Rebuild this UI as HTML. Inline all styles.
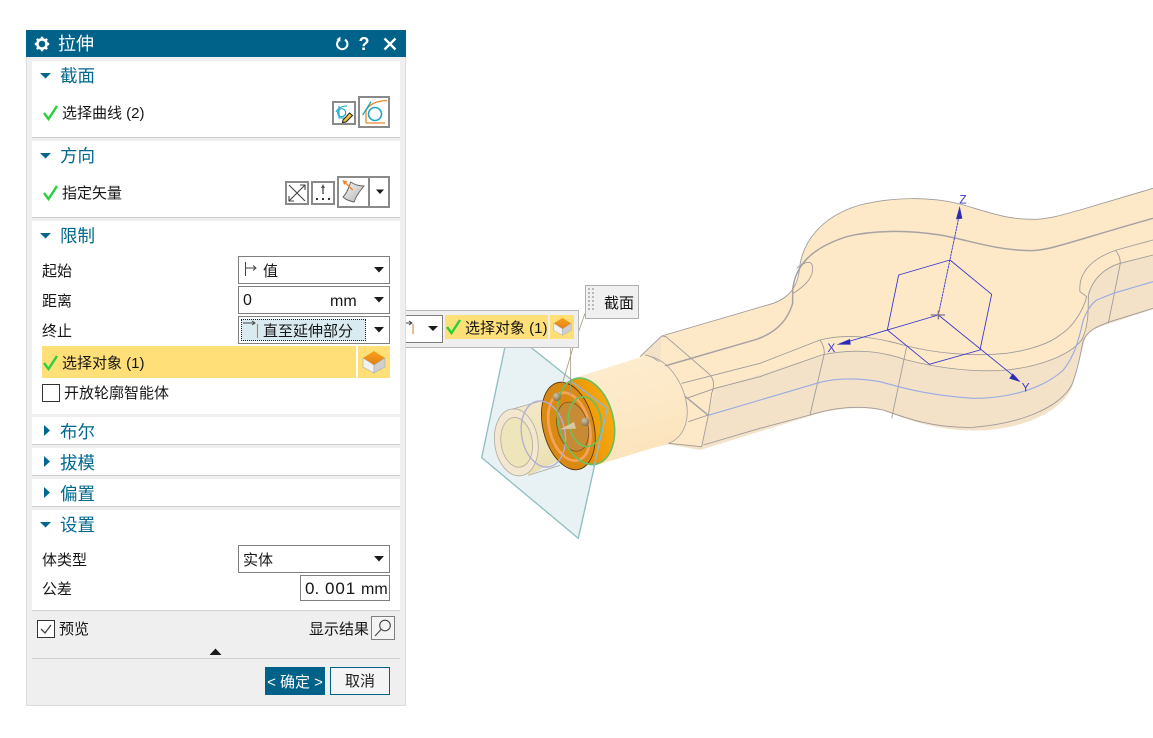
<!DOCTYPE html>
<html lang="zh"><head><meta charset="utf-8"><title>拉伸</title>
<style>
*{box-sizing:border-box}
html,body{margin:0;padding:0;width:1153px;height:738px;background:#fff;overflow:hidden}
body{position:relative;font-family:"Liberation Sans","Noto Sans CJK SC",sans-serif;font-size:15px;color:#161616}
.a{position:absolute}
.t{position:absolute;white-space:nowrap;line-height:20px;height:20px}
.h{position:absolute;white-space:nowrap;font-size:17.5px;line-height:24px;color:#00688f;left:60px}
.s{position:absolute;left:32px;width:368px;background:#fff;border-bottom:1px solid #cfcfcf}
.b{position:absolute;border:1px solid #7f7f7f;background:#fff}
.i{position:absolute;border:2px solid #8a8a8a;background:#fff}
svg{position:absolute;overflow:visible}
</style></head><body>

<!-- 3D scene -->
<svg class="a" style="left:0;top:0" width="1153" height="738" viewBox="0 0 1153 738">
<defs>
<linearGradient id="cy" x1="0.3" y1="0" x2="0.55" y2="1"><stop offset="0" stop-color="#fdeccf"/><stop offset=".55" stop-color="#fde8c6"/><stop offset="1" stop-color="#fbe3ba"/></linearGradient>
<linearGradient id="cf" x1="0" y1="0" x2="1" y2="1"><stop offset="0" stop-color="#ffeccb"/><stop offset="1" stop-color="#fbe6c4"/></linearGradient>
<linearGradient id="tb" x1="0.3" y1="0" x2="0.55" y2="1"><stop offset="0" stop-color="#f3e6c6"/><stop offset=".6" stop-color="#efe5bd"/><stop offset="1" stop-color="#e9ddb0"/></linearGradient>
<linearGradient id="or" x1="0" y1="0" x2="1" y2="0"><stop offset="0" stop-color="#c97a08"/><stop offset=".6" stop-color="#f09c08"/><stop offset="1" stop-color="#f7aa10"/></linearGradient>
<linearGradient id="sf" x1="0" y1="0" x2="1" y2="1"><stop offset="0" stop-color="#f4f4f4"/><stop offset="1" stop-color="#b5b5b5"/></linearGradient>
<linearGradient id="ct" x1="0" y1="0" x2="0" y2="1"><stop offset="0" stop-color="#f7a41f"/><stop offset="1" stop-color="#e47f12"/></linearGradient>
<radialGradient id="ball" cx=".4" cy=".35" r=".7"><stop offset="0" stop-color="#d3c6a0"/><stop offset="1" stop-color="#7d6f48"/></radialGradient>
</defs>

<!-- big body, zoom-5 coordinates -->
<g transform="translate(640 180) scale(.33333)" fill="none" stroke-linejoin="round">
<path fill="#f3e2c7" d="M0,530 L65,468 L400,370 C440,355 470,330 478,270 C485,190 540,110 660,75 C760,50 870,50 960,72 C1040,95 1100,120 1190,118 C1240,115 1280,100 1320,90 L1539,25 L1539,388 L1410,430 C1375,442 1345,450 1335,480 C1320,530 1310,580 1295,625 C1260,695 1150,750 1000,752 C880,750 800,718 730,692 C660,678 590,683 510,708 L180,810 L85,793 L0,812 Z"/>
<path fill="#fde9c8" d="M65,468 L400,370 C440,355 470,330 478,270 C485,190 540,110 660,75 C760,50 870,50 960,72 C1040,95 1100,120 1190,118 C1240,115 1280,100 1320,90 L1539,25 L1539,225 L1440,250 C1400,262 1360,290 1345,345 C1345,400 1345,440 1325,480 C1290,525 1200,560 1100,570 C1000,578 900,565 800,540 C720,512 640,505 545,525 L225,625 L205,705 L185,800 L85,790 L60,560 Z"/>
<path fill="url(#cf)" d="M0,530 L15,525 C60,530 120,610 140,670 C145,720 125,765 85,790 L0,812 Z"/>
<!-- inner thick edge -->
<path stroke="#a8a3a3" stroke-width="4.500" d="M85,555 L350,478 C400,460 440,430 458,370 L458,330 C465,260 510,205 620,170 C700,150 800,150 900,165 C980,178 1060,210 1170,212 C1230,212 1290,185 1539,115"/>
<path stroke="#a8a3a3" stroke-width="4.500" d="M85,555 L35,568 L205,706"/>
<!-- thin edges -->
<g stroke="#9d9a9a" stroke-width="2.600">
<path d="M65,468 L400,370 C440,355 470,330 478,270 C485,190 540,110 660,75 C760,50 870,50 960,72 C1040,95 1100,120 1190,118 C1240,115 1280,100 1320,90 L1539,25"/>
<path d="M125,610 L360,550 L540,480 C620,460 700,470 790,495 C880,520 1000,530 1100,520 C1170,510 1230,490 1260,465 C1300,440 1330,390 1340,350 L1320,335 C1315,290 1340,240 1430,210 L1539,180"/>
<path d="M140,655 L225,625 L360,590 L545,525 C640,505 720,512 800,540 C900,565 1000,578 1100,570 C1200,560 1290,525 1325,480 C1345,440 1345,400 1345,345 C1360,290 1400,262 1440,250 L1539,225"/>
<path d="M190,795 L360,745 L510,705 C590,680 660,675 730,690 C800,715 880,745 1000,742 C1150,730 1260,680 1295,615 C1310,580 1320,530 1330,480 C1345,450 1370,440 1410,425 L1539,385"/>
<path d="M0,530 L65,468 L78,470 L205,580 C222,595 225,615 215,640 L205,705 L185,800 L85,790 M15,525 C60,530 120,610 140,670 C145,720 125,765 85,790 M145,725 L205,705"/>
<path d="M540,480 C550,495 555,510 552,525 L510,705 M800,500 L755,715 M1425,210 C1440,225 1442,245 1440,255 L1405,430"/>
<path d="M470,265 C500,240 520,240 518,270 C515,300 490,320 460,340"/>
</g>
<path stroke="#9cabe3" stroke-width="3.500" d="M205,706 L530,610 C590,592 660,595 720,605 C770,618 850,645 1000,655 C1110,655 1210,625 1270,570 C1310,520 1320,460 1330,420 C1340,395 1350,375 1370,360 L1420,340 L1539,305"/>
<!-- triad -->
<g stroke="#3535d0" stroke-width="2.600">
<path d="M895,405 L958,105" stroke-dasharray="8 1.500"/>
<path d="M895,405 L600,492"/>
<path d="M895,405 L1130,595"/>
<path d="M742,450 L776,285 L930,240 L1055,343 L1020,510 L868,553 L742,450 Z"/>
</g>
<path fill="#2d2bb5" d="M959,78 L967,116 L948,118 Z M590,494 L630,477 L632,494 Z M1142,606 L1108,596 L1118,580 Z"/>
<path stroke="#7f6f8c" stroke-width="4" d="M872,405 L915,405 M895,392 L895,418"/>
<text x="958" y="70" font-family="Liberation Sans" font-size="36" fill="#3d3dd6">Z</text>
<text x="562" y="516" font-family="Liberation Sans" font-size="36" fill="#3d3dd6">X</text>
<text x="1145" y="634" font-family="Liberation Sans" font-size="36" fill="#3d3dd6">Y</text>
</g>

<!-- front section, zoom-4 coordinates -->
<g transform="translate(400 280) scale(.33333)" fill="none" stroke-linejoin="round">
<path fill="#e8f1f3" stroke="#8fbfbf" stroke-width="4" d="M315,200 L245,533 L535,775 L622,385 L390,200 Z"/>
<!-- main cylinder -->
<path fill="url(#cy)" d="M520,295 L720,232 C800,230 860,310 862,400 C860,450 835,480 805,490 L590,555 Z"/>
<path stroke="#a3a09f" stroke-width="2.400" d="M745,228 C810,240 860,320 862,400 C860,450 835,480 805,490"/>
<!-- thin tube -->
<path fill="url(#tb)" d="M335,392 L460,352 L520,520 L385,586 Z"/>
<ellipse cx="349" cy="487" rx="65" ry="101" transform="rotate(-8 349 487)" fill="#f3e8cf" stroke="#b4aea4" stroke-width="2.600"/>
<ellipse cx="350" cy="487" rx="47" ry="75" transform="rotate(-8 350 487)" fill="#efe5ba" stroke="#b4aea4" stroke-width="2.600"/>
<path stroke="#b4aea4" stroke-width="2.600" d="M335,388 L440,358 M385,586 L480,556"/>
<!-- disc -->
<ellipse cx="558" cy="425" rx="84" ry="132" transform="rotate(-14 558 425)" fill="url(#or)"/>
<ellipse cx="505" cy="438" rx="76" ry="134" transform="rotate(-14 505 438)" fill="#d98a12" stroke="#4e3210" stroke-width="2.500"/>
<ellipse cx="508" cy="440" rx="60" ry="104" transform="rotate(-14 508 440)" stroke="#f5a25a" stroke-width="8"/>
<ellipse cx="518" cy="440" rx="46" ry="75" transform="rotate(-14 518 440)" fill="#c98a35" stroke="#7a5524" stroke-width="2.400"/>
<ellipse cx="430" cy="462" rx="65" ry="100" transform="rotate(-10 430 462)" stroke="#b2add6" stroke-width="4"/>
<ellipse cx="558" cy="424" rx="82" ry="132" transform="rotate(-14 558 424)" stroke="#6bbf5f" stroke-width="5"/>
<ellipse cx="555" cy="425" rx="49" ry="75" transform="rotate(-8 555 425)" stroke="#6bbf5f" stroke-width="5"/>
<path stroke="#8fb7d2" stroke-width="4.500" d="M515,305 L622,385 L582,560"/>
<!-- leader lines -->
<path stroke="#a2997c" stroke-width="2.400" d="M555,100 L520,200 L487,310 M512,200 L512,345"/>
<circle cx="470" cy="350" r="13" fill="url(#ball)"/>
<circle cx="555" cy="425" r="13" fill="url(#ball)"/>
<path fill="#d8c9a0" d="M480,448 L522,426 L528,446 Z"/>
</g>
</svg>

<!-- Floating toolbar -->
<div class="a" style="left:406px;top:310px;width:173px;height:38px;background:#efefef;border:1.500px solid #b8b8b8;border-left:none"></div>
<div class="a" style="left:406px;top:315px;width:37px;height:28px;background:#fff;border:1px solid #7f7f7f;border-left:none"></div>
<svg style="left:406px;top:315px" width="37" height="28" fill="none"><path d="M0,8 H5 M3,6 L6,8 L3,10" stroke="#444" stroke-width="1"/><path d="M7,9 V19" stroke="#d9772b" stroke-width="1"/><path d="M22,11 H32 L27,16 Z" fill="#1a1a1a"/></svg>
<div class="a" style="left:445px;top:315px;width:103px;height:24px;background:#ffdf78"></div>
<div class="a" style="left:550px;top:315px;width:24px;height:24px;background:#ffdf78"></div>
<svg style="left:445px;top:318px" width="18" height="20" fill="none"><path d="M2,9 L6.500,15 L15,2" stroke="#2ad13c" stroke-width="2.500"/></svg>
<div class="t" style="left:465px;top:319px">选择对象 (1)</div>
<svg style="left:553px;top:317px" width="19" height="19" viewBox="0 0 24 24"><path d="M12,1 L23,8 L12,15 L1,8 Z" fill="url(#ct)"/><path d="M1,8 L12,15 V23 L1,17 Z" fill="#f2f2f2" stroke="#aaa" stroke-width=".6"/><path d="M23,8 L12,15 V23 L23,17 Z" fill="#cfcfcf" stroke="#aaa" stroke-width=".6"/></svg>
<div class="a" style="left:585px;top:285px;width:54px;height:34px;background:#f0f0f0;border:1px solid #b0b0b0"></div>
<svg style="left:587px;top:287px" width="10" height="30"><g fill="#b9b9b9"><rect x="1" y="1" width="2" height="2"/><rect x="5" y="1" width="2" height="2"/><rect x="1" y="5" width="2" height="2"/><rect x="5" y="5" width="2" height="2"/><rect x="1" y="9" width="2" height="2"/><rect x="5" y="9" width="2" height="2"/><rect x="1" y="13" width="2" height="2"/><rect x="5" y="13" width="2" height="2"/><rect x="1" y="17" width="2" height="2"/><rect x="5" y="17" width="2" height="2"/><rect x="1" y="21" width="2" height="2"/><rect x="5" y="21" width="2" height="2"/></g></svg>
<div class="t" style="left:604px;top:294px">截面</div>

<!-- Dialog -->
<div class="a" style="left:26px;top:30px;width:380px;height:676px;background:#efefef;border:1px solid #dcdcdc"></div>
<div class="a" style="left:26px;top:30px;width:380px;height:27px;background:#006288"></div>
<svg style="left:34px;top:36px" width="16" height="16" viewBox="0 0 16 16"><circle cx="8" cy="8" r="4.600" fill="none" stroke="#fff" stroke-width="2.600"/><g stroke="#fff" stroke-width="2.400"><path d="M8,0.800V3.400M8,12.600V15.200M0.800,8H3.400M12.600,8H15.200M2.900,2.900L4.700,4.700M11.300,11.300L13.100,13.100M2.900,13.100L4.700,11.300M11.300,4.700L13.100,2.900"/></g></svg>
<div class="t" style="left:58px;top:32px;font-size:18px;line-height:25px;height:25px;color:#fff">拉伸</div>
<svg style="left:334px;top:36px" width="16" height="16" fill="none"><path d="M5.500,3.600 A5.200,5.200 0 1 0 11,3.600" stroke="#fff" stroke-width="2"/><path d="M6.400,0.600 V5.800 L2.600,3.200 Z" fill="#fff"/></svg>
<div class="t" style="left:358px;top:33px;width:12px;font-size:18px;font-weight:bold;line-height:22px;height:22px;color:#fff;text-align:center">?</div>
<svg style="left:383px;top:37px" width="14" height="14" fill="none"><path d="M1.500,1.500 L12.500,12.500 M12.500,1.500 L1.500,12.500" stroke="#fff" stroke-width="2.300"/></svg>

<div class="s" style="top:61px;height:77px"></div>
<div class="s" style="top:141px;height:77px"></div>
<div class="s" style="top:221px;height:193px;border-bottom:none"></div>
<div class="s" style="top:417px;height:28px"></div>
<div class="s" style="top:448px;height:28px"></div>
<div class="s" style="top:479px;height:28px"></div>
<div class="s" style="top:510px;height:101px"></div>

<!-- Section headers -->
<svg style="left:40px;top:72px" width="12" height="8"><path d="M0,1 H11 L5.500,6.500 Z" fill="#00688f"/></svg>
<div class="h" style="top:64px">截面</div>
<svg style="left:40px;top:152px" width="12" height="8"><path d="M0,1 H11 L5.500,6.500 Z" fill="#00688f"/></svg>
<div class="h" style="top:144px">方向</div>
<svg style="left:40px;top:232px" width="12" height="8"><path d="M0,1 H11 L5.500,6.500 Z" fill="#00688f"/></svg>
<div class="h" style="top:224px">限制</div>
<svg style="left:43px;top:425px" width="8" height="12"><path d="M1,0 V11 L7,5.500 Z" fill="#00688f"/></svg>
<div class="h" style="top:420px">布尔</div>
<svg style="left:43px;top:456px" width="8" height="12"><path d="M1,0 V11 L7,5.500 Z" fill="#00688f"/></svg>
<div class="h" style="top:451px">拔模</div>
<svg style="left:43px;top:487px" width="8" height="12"><path d="M1,0 V11 L7,5.500 Z" fill="#00688f"/></svg>
<div class="h" style="top:482px">偏置</div>
<svg style="left:40px;top:521px" width="12" height="8"><path d="M0,1 H11 L5.500,6.500 Z" fill="#00688f"/></svg>
<div class="h" style="top:513px">设置</div>

<!-- 截面 row -->
<svg style="left:42px;top:104px" width="18" height="18" fill="none"><path d="M2,9 L6.500,15 L15,2" stroke="#2ad13c" stroke-width="2.500"/></svg>
<div class="t" style="left:62px;top:104px">选择曲线 (2)</div>
<div class="i" style="left:332px;top:101px;width:24px;height:24px"></div>
<svg style="left:334px;top:103px" width="20" height="20" fill="none"><path d="M2,9 C4,5 8,3 13,3" stroke="#1aa7c9" stroke-width="1.100"/><path d="M5,3 V15 H12" stroke="#1aa7c9" stroke-width="1.100"/><circle cx="7.700" cy="9.700" r="4" stroke="#1aa7c9" stroke-width="1.200"/><path d="M9,17 L15.500,10 L18.500,12.500 L12,19 L8.500,19.500 Z" fill="#f4c430" stroke="#222" stroke-width="1"/></svg>
<div class="i" style="left:358px;top:96px;width:32px;height:32px"></div>
<svg style="left:360px;top:98px" width="28" height="28" fill="none"><path d="M6,25 V13 C9,6 16,3 27,2.500 M6,25 H25" stroke="#e8872d" stroke-width="1.300"/><path d="M2.700,17 L11,3.700" stroke="#1aa7c9" stroke-width="1.300"/><circle cx="15" cy="16" r="6.500" stroke="#1aa7c9" stroke-width="1.600"/></svg>

<!-- 方向 row -->
<svg style="left:42px;top:184px" width="18" height="18" fill="none"><path d="M2,9 L6.500,15 L15,2" stroke="#2ad13c" stroke-width="2.500"/></svg>
<div class="t" style="left:62px;top:184px">指定矢量</div>
<div class="i" style="left:285px;top:181px;width:24px;height:24px"></div>
<svg style="left:287px;top:183px" width="20" height="20" fill="none" stroke="#444" stroke-width="1.100"><path d="M2,2 L18,18 M18,2 L2,18 M13,2 H18 V7 M2,13 V18 H7"/></svg>
<div class="i" style="left:311px;top:181px;width:24px;height:24px"></div>
<svg style="left:313px;top:183px" width="20" height="20"><path d="M10,1 L12,5 H8 Z" fill="#555"/><rect x="9.300" y="5" width="1.400" height="6" fill="#555"/><g fill="#333"><rect x="3" y="15" width="2" height="2"/><rect x="9" y="15" width="2" height="2"/><rect x="15" y="15" width="2" height="2"/></g></svg>
<div class="i" style="left:337px;top:176px;width:53px;height:32px"></div>
<div class="a" style="left:368px;top:177px;width:1.500px;height:30px;background:#8a8a8a"></div>
<svg style="left:340px;top:178px" width="28" height="28" fill="none"><path d="M10.700,4 C15,7 20,8 24,8 C20,13 16,18 14,24 C10,23 6,22 3,19 C7,15 9,9 10.700,4 Z" fill="url(#sf)" stroke="#666" stroke-width="1"/><path d="M4,3.500 L12.700,12" stroke="#f08020" stroke-width="1.300"/><path d="M2.500,2 L7.500,3.500 L4,7 Z" fill="#f08020"/></svg>
<svg style="left:376px;top:189px" width="8" height="6"><path d="M0,0.500 H8 L4,5 Z" fill="#1a1a1a"/></svg>

<!-- 限制 rows -->
<div class="t" style="left:42px;top:262px">起始</div>
<div class="b" style="left:238px;top:256px;width:152px;height:28px"></div>
<svg style="left:244px;top:261px" width="16" height="18" fill="none" stroke="#444" stroke-width="1"><path d="M1.500,1 V15 M2,7 H12 M9,4.500 L12,7 L9,9.500"/></svg>
<div class="t" style="left:263px;top:262px">值</div>
<svg style="left:374px;top:267px" width="10" height="6"><path d="M0,0 H10 L5,5.500 Z" fill="#1a1a1a"/></svg>

<div class="t" style="left:42px;top:292px">距离</div>
<div class="b" style="left:238px;top:286px;width:152px;height:28px"></div>
<div class="t" style="left:243px;top:291px;font-size:16px">0</div>
<div class="t" style="left:330px;top:292px;font-size:16px">mm</div>
<svg style="left:374px;top:297px" width="10" height="6"><path d="M0,0 H10 L5,5.500 Z" fill="#1a1a1a"/></svg>

<div class="t" style="left:42px;top:322px">终止</div>
<div class="b" style="left:238px;top:316px;width:152px;height:28px"></div>
<div class="a" style="left:241px;top:319px;width:125px;height:22px;background:#d9eaf0;border:1px dotted #222"></div>
<svg style="left:243px;top:320px" width="18" height="20" fill="none"><path d="M0,3 H12 M9,1 L12,3 L9,5" stroke="#444" stroke-width="1"/><path d="M14.500,4 V18" stroke="#d9772b" stroke-width="1.100"/></svg>
<div class="t" style="left:263px;top:322px">直至延伸部分</div>
<svg style="left:374px;top:327px" width="10" height="6"><path d="M0,0 H10 L5,5.500 Z" fill="#1a1a1a"/></svg>

<div class="a" style="left:42px;top:346px;width:314px;height:32px;background:#ffdf78"></div>
<div class="a" style="left:358px;top:346px;width:32px;height:32px;background:#ffdf78"></div>
<svg style="left:42px;top:354px" width="18" height="18" fill="none"><path d="M2,9 L6.500,15 L15,2" stroke="#2ad13c" stroke-width="2.500"/></svg>
<div class="t" style="left:62px;top:354px">选择对象 (1)</div>
<svg style="left:362px;top:350px" width="24" height="24" viewBox="0 0 24 24"><path d="M12,1 L23,8 L12,15 L1,8 Z" fill="url(#ct)"/><path d="M1,8 L12,15 V23 L1,17 Z" fill="#f2f2f2" stroke="#aaa" stroke-width=".6"/><path d="M23,8 L12,15 V23 L23,17 Z" fill="#cfcfcf" stroke="#aaa" stroke-width=".6"/></svg>

<div class="a" style="left:42px;top:384px;width:18px;height:18px;background:#fff;border:1px solid #333"></div>
<div class="t" style="left:64px;top:384px">开放轮廓智能体</div>

<!-- 设置 rows -->
<div class="t" style="left:42px;top:551px">体类型</div>
<div class="b" style="left:238px;top:545px;width:152px;height:28px"></div>
<div class="t" style="left:243px;top:551px">实体</div>
<svg style="left:374px;top:556px" width="10" height="6"><path d="M0,0 H10 L5,5.500 Z" fill="#1a1a1a"/></svg>
<div class="t" style="left:42px;top:580px">公差</div>
<div class="b" style="left:300px;top:575px;width:90px;height:26px"></div>
<div class="t" style="left:305px;top:579px;font-size:17px">0.</div>
<div class="t" style="left:325px;top:579px;font-size:17px;letter-spacing:.9px">001</div>
<div class="t" style="left:361px;top:580px;font-size:16px">mm</div>

<!-- footer -->
<div class="a" style="left:37px;top:620px;width:18px;height:18px;background:#fff;border:1px solid #333"></div>
<svg style="left:37px;top:620px" width="18" height="18" fill="none"><path d="M4,9 L8,13 L14,5" stroke="#444" stroke-width="1.300"/></svg>
<div class="t" style="left:59px;top:620px">预览</div>
<div class="t" style="left:309px;top:620px">显示结果</div>
<div class="a" style="left:371px;top:616px;width:24px;height:24px;border:1px solid #7f7f7f;background:#f4f4f4"></div>
<svg style="left:373px;top:618px" width="20" height="20" fill="none" stroke="#444" stroke-width="1.100"><circle cx="12" cy="7.500" r="5.300"/><path d="M8,11.500 L2,18"/></svg>
<svg style="left:209px;top:648px" width="13" height="8"><path d="M6.500,0.500 L12.500,7 H0.500 Z" fill="#1a1a1a"/></svg>
<div class="a" style="left:32px;top:658px;width:368px;height:1px;background:#cfcfcf"></div>
<div class="a" style="left:265px;top:667px;width:60px;height:28px;background:#006288;color:#fff;text-align:center;line-height:31px;white-space:nowrap">&lt; 确定 &gt;</div>
<div class="a" style="left:330px;top:667px;width:60px;height:28px;background:#f4f4f4;border:1px solid #006288;color:#222;text-align:center;line-height:28px">取消</div>
</body></html>
